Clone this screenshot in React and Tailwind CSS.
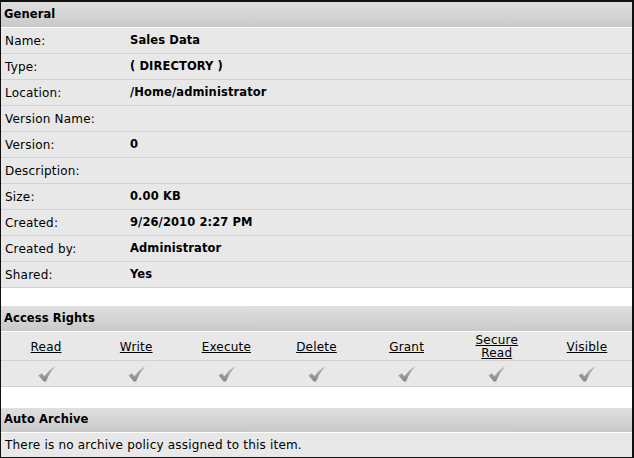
import React from 'react';

const general = [
  ['Name:', 'Sales Data'],
  ['Type:', '( DIRECTORY )'],
  ['Location:', '/Home/administrator'],
  ['Version Name:', ''],
  ['Version:', '0'],
  ['Description:', ''],
  ['Size:', '0.00 KB'],
  ['Created:', '9/26/2010 2:27 PM'],
  ['Created by:', 'Administrator'],
  ['Shared:', 'Yes'],
];

const rights = ['Read', 'Write', 'Execute', 'Delete', 'Grant', 'Secure Read', 'Visible'];

const Header = ({ title, className = '' }) => (
  <div className={`flex items-center px-[3px] font-bold text-[11.5px] tracking-[0.1px] border-b border-white bg-gradient-to-b from-[#e0e0e0] to-[#c9c9c9] ${className}`}>
    {title}
  </div>
);

const Check = () => (
  <svg width="17" height="16" viewBox="0 0 16 15">
    <defs>
      <linearGradient id="chk" x1="0" y1="0" x2="0" y2="1">
        <stop offset="0" stopColor="#bababa" />
        <stop offset="1" stopColor="#858585" />
      </linearGradient>
    </defs>
    <path d="M0.5 8.8 L3.6 6.8 L6 9.6 Q10 4 15.5 0.5 L15.5 1.3 Q11 6 7.6 14.5 L5.4 14.5 Z" fill="url(#chk)" />
  </svg>
);

export default function App() {
  return (
    <div
      className="w-[634px] h-[458px] bg-white text-black text-[12px] tracking-[0.2px] border-t-2 border-l border-b border-r-2 border-[#111] flex flex-col overflow-hidden"
      style={{ fontFamily: '"DejaVu Sans", Verdana, sans-serif' }}
    >
      <Header title="General" className="h-[26px]" />
      {general.map(([label, value]) => (
        <div key={label} className="flex items-center h-[26px] bg-[#e8e8e8] border-b border-[#d2d2d2]">
          <div className="w-[129px] pl-[4px]">{label}</div>
          <div className="font-bold text-[11.5px] tracking-[0.1px]">{value}</div>
        </div>
      ))}
      <div className="h-[18px] shrink-0" />
      <Header title="Access Rights" className="h-[26px]" />
      <div className="grid grid-cols-7 h-[29px] bg-[#e8e8e8] border-b border-[#d2d2d2]">
        {rights.map(r => (
          <div key={r} className="flex items-center justify-center text-center leading-[13px] pt-[2px]">
            <span className="underline w-[50px]">{r}</span>
          </div>
        ))}
      </div>
      <div className="grid grid-cols-7 h-[26px] bg-[#e8e8e8] border-b border-[#d2d2d2]">
        {rights.map(r => (
          <div key={r} className="flex items-center justify-center">
            <Check />
          </div>
        ))}
      </div>
      <div className="h-[21px] shrink-0" />
      <Header title="Auto Archive" className="h-[25px]" />
      <div className="flex-1 flex items-center pl-[4px] bg-[#e8e8e8]">
        There is no archive policy assigned to this item.
      </div>
    </div>
  );
}
